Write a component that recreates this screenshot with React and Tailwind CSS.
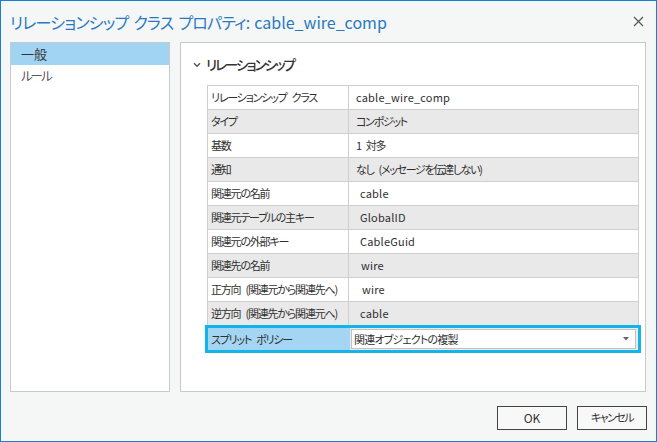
import React from "react";

const rows = [
  ["リレーションシップ クラス", "cable_wire_comp", false, 7, false],
  ["タイプ", "コンポジット", true, 7, true],
  ["基数", "1 対多", false, 7, true],
  ["通知", "なし (メッセージを伝達しない)", true, 7, true],
  ["関連元の名前", "cable", false, 11, false],
  ["関連元テーブルの主キー", "GlobalID", true, 11, false],
  ["関連元の外部キー", "CableGuid", false, 11, false],
  ["関連先の名前", "wire", true, 12, false],
  ["正方向 (関連元から関連先へ)", "wire", false, 13, false],
  ["逆方向 (関連先から関連元へ)", "cable", true, 11, false],
];

const font = { fontFamily: '"Noto Sans CJK JP", "Noto Sans", sans-serif' };

function T({ children }) {
  const parts = children.split(" ");
  return (
    <>
      {parts.map((p, i) => (
        <React.Fragment key={i}>
          {i > 0 && <span className="inline-block w-[5px]" />}
          {p}
        </React.Fragment>
      ))}
    </>
  );
}

export default function App() {
  return (
    <div
      className="w-[657px] h-[442px] border border-[#1a7fd0] bg-[#f5f7f7] flex flex-col text-[#333] [font-feature-settings:'palt']"
      style={font}
    >
      <div className="h-[41px] shrink-0 flex items-center justify-between pl-[9px] pr-[12px]">
        <div className="text-[16px] text-[#2a78c0] leading-none">
          <span className="tracking-[-0.8px]">
            <T>リレーションシップ クラス プロパティ:</T>
          </span>
          <span className="inline-block w-[5px]" />
          cable_wire_comp
        </div>
        <svg width="11" height="11" viewBox="0 0 11 11">
          <path d="M1 1L10 10M10 1L1 10" stroke="#555" strokeWidth="1.2" />
        </svg>
      </div>
      <div className="flex flex-1 px-[9px] gap-[10px] min-h-0">
        <div className="w-[160px] h-[350px] border border-[#c9c9c9] bg-white">
          <div className="h-[22px] bg-[#a0d4f2] flex items-center pl-[10px] text-[13px]">一般</div>
          <div className="h-[22px] flex items-center pl-[10px] text-[12.5px] tracking-[-2px] text-[#555]">ルール</div>
        </div>
        <div className="w-[466px] h-[350px] border border-[#c9c9c9] bg-white flex flex-col">
          <div className="h-[42px] flex items-center pl-[12px] pt-[1px] gap-[5px]">
            <svg width="8" height="6" viewBox="0 0 8 6">
              <path d="M1 1.2L4 4.2L7 1.2" stroke="#555" strokeWidth="1.4" fill="none" />
            </svg>
            <span className="text-[13.5px] font-medium text-[#333] tracking-[-2px]">リレーションシップ</span>
          </div>
          <div className="ml-[26px] w-[432px] border-t border-l border-r border-[#cfcfcf]">
            {rows.map(([k, v, alt, pl, jp], i) => (
              <div
                key={i}
                className={`flex h-[24px] border-b border-[#cfcfcf] text-[11px] text-[#2f2f2f] ${alt ? "bg-[#e9e9e9]" : "bg-white"}`}
              >
                <div className="w-[141px] shrink-0 border-r border-[#cfcfcf] pl-[3px] flex items-center whitespace-nowrap overflow-hidden tracking-[-1.2px]">
                  <T>{k}</T>
                </div>
                <div
                  className={`flex-1 flex items-center whitespace-nowrap ${jp ? "tracking-[-1.3px]" : "tracking-[0.2px]"}`}
                  style={{ paddingLeft: pl }}
                >
                  <T>{v}</T>
                </div>
              </div>
            ))}
          </div>
          <div className="ml-[24px] w-[436px] h-[28px] border-[3px] border-[#12b4ea] -mt-[1px] flex">
            <div className="w-[142px] shrink-0 bg-[#a4d6f3] pl-[3px] flex items-center text-[11px] tracking-[-1.2px] text-[#2f2f2f]">
              <T>スプリット ポリシー</T>
            </div>
            <div className="flex-1 bg-[#eaeaea] flex items-center pl-[1px] pr-[2px]">
              <div className="w-full h-[20px] bg-white border border-[#c2c2c2] flex items-center justify-between pl-[2px] pr-[6px] text-[11px] text-[#2f2f2f]">
                <span className="tracking-[-0.8px]">関連オブジェクトの複製</span>
                <svg width="6" height="4" viewBox="0 0 6 4">
                  <path d="M0 0H6L3 3.5Z" fill="#666" />
                </svg>
              </div>
            </div>
          </div>
        </div>
      </div>
      <div className="h-[49px] shrink-0 flex items-center justify-end gap-[10px] pr-[9px] pt-[2px]">
        <button className="w-[70px] h-[24px] border border-[#444] bg-[#f8f8f8] text-[12px] text-[#333]">OK</button>
        <button className="w-[70px] h-[24px] border border-[#444] bg-[#f8f8f8] text-[11px] tracking-[-1.5px] text-[#333]">キャンセル</button>
      </div>
    </div>
  );
}
